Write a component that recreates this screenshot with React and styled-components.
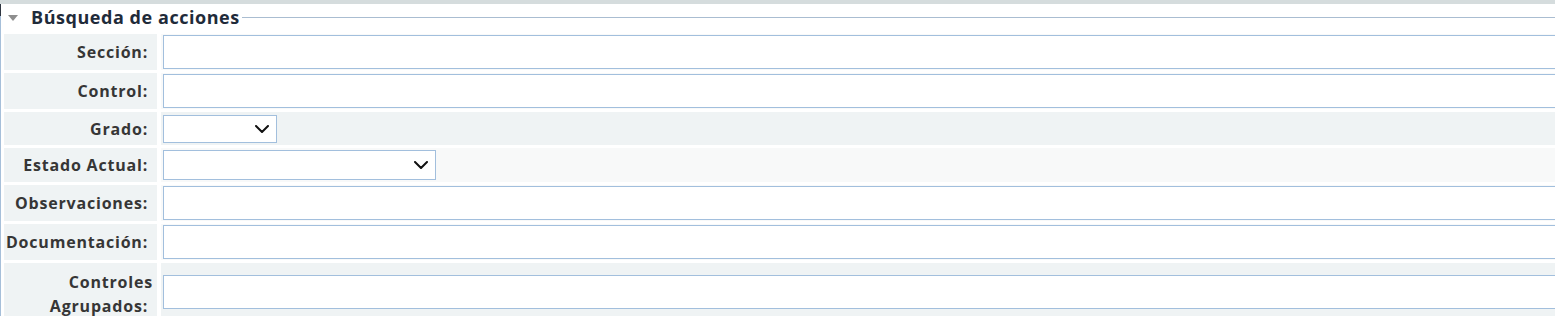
import React from 'react';
import styled, { createGlobalStyle } from 'styled-components';

const GlobalStyle = createGlobalStyle`
  html, body {
    margin: 0;
    padding: 0;
    background: #fff;
    overflow: hidden;
  }
  body {
    font-family: "Open Sans", "Noto Sans", sans-serif;
  }
`;

const Page = styled.div`
  width: 1620px;
`;

const TopBar = styled.div`
  height: 4px;
  background: #d5dcdd;
`;

const Fieldset = styled.section`
  padding-left: 4px;
  background: linear-gradient(to bottom, #2e3540 0 12px, #a6bfd9 12px) no-repeat left top / 1px 100%;
`;

const Legend = styled.div`
  display: flex;
  align-items: center;
  height: 26px;
  margin-left: 4px;
  margin-bottom: 4px;
`;

const Caret = styled.span`
  width: 0;
  height: 0;
  border-left: 5px solid transparent;
  border-right: 5px solid transparent;
  border-top: 6px solid #8e8e8e;
  margin-right: 13px;
  margin-top: 1px;
`;

const Title = styled.h2`
  margin: 0;
  font-size: 18px;
  line-height: 22px;
  font-weight: 700;
  color: #1f2b3a;
  letter-spacing: 0.55px;
  white-space: nowrap;
`;

const Rule = styled.span`
  flex: 1;
  border-top: 1px solid #aabdd1;
  margin-left: 2px;
  margin-top: 1px;
`;

const Grid = styled.div`
  display: grid;
  grid-template-columns: 153px 1fr;
  column-gap: 4px;
  row-gap: 3px;
`;

const Label = styled.div`
  display: flex;
  align-items: center;
  justify-content: flex-end;
  text-align: right;
  background: #eff3f4;
  padding: ${p => (p.$tall ? '7px 4px 2px 8px' : '0 4px 0 0')};
  font-size: 16px;
  font-weight: 700;
  letter-spacing: 0.8px;
  line-height: ${p => (p.$tall ? '24px' : '20px')};
  color: #363636;
  white-space: ${p => (p.$tall ? 'normal' : 'nowrap')};
`;

const Cell = styled.div`
  display: flex;
  align-items: center;
  background: ${p => (p.$shaded ? '#eff3f4' : '#f8f9f9')};
  padding: ${p => p.$pad || '1px 0 1px 2px'};
`;

const TextInput = styled.div`
  flex: 1;
  height: 34px;
  box-sizing: border-box;
  border: 1px solid #a2bfdd;
  background: #fff;
`;

const SelectBox = styled.div`
  display: flex;
  align-items: center;
  justify-content: flex-end;
  box-sizing: border-box;
  width: ${p => p.$w}px;
  height: ${p => p.$h}px;
  padding-right: ${p => p.$pr}px;
  border: 1px solid #a2bfdd;
  background: #fff;
`;

const Chevron = () => (
  <svg width="14" height="8" viewBox="0 0 14 8" fill="none">
    <path d="M1 1l6 6 6-6" stroke="#111" strokeWidth="2" strokeLinecap="round" strokeLinejoin="round" />
  </svg>
);

const rows = [
  { label: 'Sección:', kind: 'text' },
  { label: 'Control:', kind: 'text' },
  { label: 'Grado:', kind: 'select', w: 114, h: 28, pr: 7, pad: '3px 0 2px 2px', shaded: true },
  { label: 'Estado Actual:', kind: 'select', w: 273, h: 30, pr: 7, pad: '2px 0 2px 2px' },
  { label: 'Observaciones:', kind: 'text' },
  { label: 'Documentación:', kind: 'text' },
];

export default function App() {
  return (
    <Page>
      <GlobalStyle />
      <TopBar />
      <Fieldset>
        <Legend>
          <Caret />
          <Title>Búsqueda de acciones</Title>
          <Rule />
        </Legend>
        <Grid>
          {rows.map(r => (
            <React.Fragment key={r.label}>
              <Label>{r.label}&nbsp;</Label>
              <Cell $shaded={r.shaded} $pad={r.pad}>
                {r.kind === 'text' ? (
                  <TextInput />
                ) : (
                  <SelectBox $w={r.w} $h={r.h} $pr={r.pr}>
                    <Chevron />
                  </SelectBox>
                )}
              </Cell>
            </React.Fragment>
          ))}
          <Label $tall>Controles Agrupados:&nbsp;</Label>
          <Cell $shaded>
            <TextInput />
          </Cell>
        </Grid>
      </Fieldset>
    </Page>
  );
}
